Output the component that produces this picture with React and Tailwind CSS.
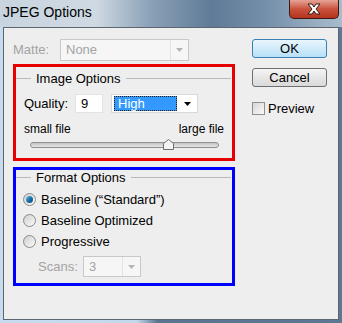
import React from "react";

const font = { fontFamily: '"Liberation Sans", Arial, sans-serif' };

const GroupHeader = ({ title, h }) => (
  <div className={`flex items-center ${h}`}>
    <div className="w-[15px] h-px bg-[#b9b9b9]" />
    <span className="px-[5px] text-[13px] text-black leading-none">{title}</span>
    <div className="flex-1 h-px bg-[#b9b9b9] mr-[1px]" />
  </div>
);

const Radio = ({ checked, label }) => (
  <div className="flex items-center h-[21px] pl-[7px]">
    <div className="w-[13px] h-[13px] rounded-full border border-[#8a8a8a] bg-gradient-to-br from-[#cfcfcf] to-[#fbfbfb] flex items-center justify-center">
      {checked && (
        <div className="w-[7px] h-[7px] rounded-full bg-gradient-to-br from-[#5dc0ef] via-[#1a72a9] to-[#0c4a78]" />
      )}
    </div>
    <span className="ml-[5px] text-[13px] text-black">{label}</span>
  </div>
);

const Arrow = ({ color }) => (
  <svg width="7" height="4" viewBox="0 0 7 4">
    <path d="M0 0 H7 L3.5 4 Z" fill={color} />
  </svg>
);

export default function App() {
  return (
    <div
      className="w-[342px] h-[323px] overflow-hidden bg-[linear-gradient(90deg,#c9dcef_0%,#c4d8ec_40%,#5a7590_46%,#5d7893_100%)]"
      style={font}
    >
      {/* title bar */}
      <div className="h-[27px] flex items-start justify-between bg-[linear-gradient(90deg,#c8d4df_0%,#cfd9e3_28%,#8aa1b7_44%,#5f7b97_62%,#7590aa_78%,#a9bccd_100%)]">
        <span className="pl-[3px] pt-[5px] text-[14px] text-black leading-none">JPEG Options</span>
        <div className="mr-[3px] w-[50px] h-[19px] rounded-b-[5px] border border-t-0 border-[#3d1a14] bg-gradient-to-b from-[#e6a397] via-[#c9513c] to-[#b5331c] flex items-center justify-center">
          <svg width="16" height="12" viewBox="0 0 16 12">
            <path
              d="M2 1 H6 L8 4 L10 1 H14 L10 6 L14 11 H10 L8 8 L6 11 H2 L6 6 Z"
              fill="#ffffff"
              stroke="#3a1a14"
              strokeWidth="1"
              strokeLinejoin="round"
            />
          </svg>
        </div>
      </div>

      {/* client area */}
      <div className="mx-[3px] h-[293px] border border-[#5d6670] bg-[#eeeeee] flex pl-[9px] pt-[11px]">
        {/* left column */}
        <div className="w-[222px] flex flex-col">
          <div className="flex items-center h-[22px]">
            <span className="w-[47px] text-[13px] text-[#a3a3a3]">Matte:</span>
            <div className="w-[129px] h-[22px] border border-[#c9c9c9] bg-[#f6f6f6] flex">
              <span className="flex-1 pl-[5px] text-[13px] leading-[20px] text-[#a3a3a3]">None</span>
              <div className="w-[18px] border-l border-[#e2e2e2] flex items-center justify-center">
                <Arrow color="#b5b5b5" />
              </div>
            </div>
          </div>

          {/* image options */}
          <div className="mt-[3px] h-[97px] border-[3px] border-[#e60000] flex flex-col">
            <GroupHeader title="Image Options" h="h-[22px]" />
            <div className="mt-[5px] h-[19px] flex items-center pl-[8px]">
              <span className="w-[51px] text-[13px] text-black">Quality:</span>
              <div className="w-[28px] h-[19px] bg-white border border-[#e3e3e3] pl-[5px] text-[13px] leading-[17px] text-black">
                9
              </div>
              <div className="ml-[8px] w-[87px] h-[19px] bg-white border border-[#d9d9d9] flex items-center pl-[2px]">
                <div className="w-[63px] h-[15px] bg-[#3399ff] border border-dotted border-[#2a1a00] text-white text-[13px] leading-[13px] pl-[3px]">
                  High
                </div>
                <div className="flex-1 flex justify-center">
                  <Arrow color="#000000" />
                </div>
              </div>
            </div>
            <div className="mt-[9px] h-[15px] flex justify-between px-[8px] text-[12px] leading-[15px] text-black">
              <span>small file</span>
              <span>large file</span>
            </div>
            <div className="mt-[2px] h-[12px] ml-[14px] w-[189px] relative flex items-center">
              <div className="w-full h-[6px] rounded-[3px] border border-[#8f8f8f] bg-gradient-to-b from-[#c4c4c4] to-[#e6e6e6]" />
              <svg className="absolute left-[133px] top-0" width="11" height="11" viewBox="0 0 11 11">
                <path d="M0.5 10.5 V4.5 L5.5 0.5 L10.5 4.5 V10.5 Z" fill="#f3f3f3" stroke="#6e6e6e" />
              </svg>
            </div>
          </div>

          {/* format options */}
          <div className="mt-[6px] h-[119px] border-[3px] border-[#0000ff] flex flex-col">
            <GroupHeader title="Format Options" h="h-[14px]" />
            <div className="mt-[5px]">
              <Radio checked label={"Baseline (\u201cStandard\u201d)"} />
              <Radio label="Baseline Optimized" />
              <Radio label="Progressive" />
            </div>
            <div className="mt-[4px] h-[21px] flex items-center pl-[22px]">
              <span className="w-[45px] text-[13px] text-[#a3a3a3]">Scans:</span>
              <div className="w-[58px] h-[21px] border border-[#c9c9c9] bg-[#f6f6f6] flex">
                <span className="flex-1 pl-[5px] text-[13px] leading-[19px] text-[#a3a3a3]">3</span>
                <div className="w-[18px] border-l border-[#e2e2e2] flex items-center justify-center">
                  <Arrow color="#b5b5b5" />
                </div>
              </div>
            </div>
          </div>
        </div>

        {/* right column */}
        <div className="ml-[17px] flex flex-col">
          <div className="w-[75px] h-[19px] rounded-[3px] border border-[#3c7fb1] bg-gradient-to-b from-[#e9f6fd] to-[#b8e0f8] flex items-center justify-center text-[13px] text-black">
            OK
          </div>
          <div className="mt-[10px] w-[75px] h-[19px] rounded-[3px] border border-[#707070] bg-gradient-to-b from-[#f4f4f4] to-[#d9d9d9] flex items-center justify-center text-[13px] text-black">
            Cancel
          </div>
          <div className="mt-[12px] flex items-center">
            <div className="w-[13px] h-[13px] border border-[#8e8f8f] bg-gradient-to-br from-[#d6d6d6] to-[#fafafa]" />
            <span className="ml-[3px] text-[13px] text-black">Preview</span>
          </div>
        </div>
      </div>
    </div>
  );
}
